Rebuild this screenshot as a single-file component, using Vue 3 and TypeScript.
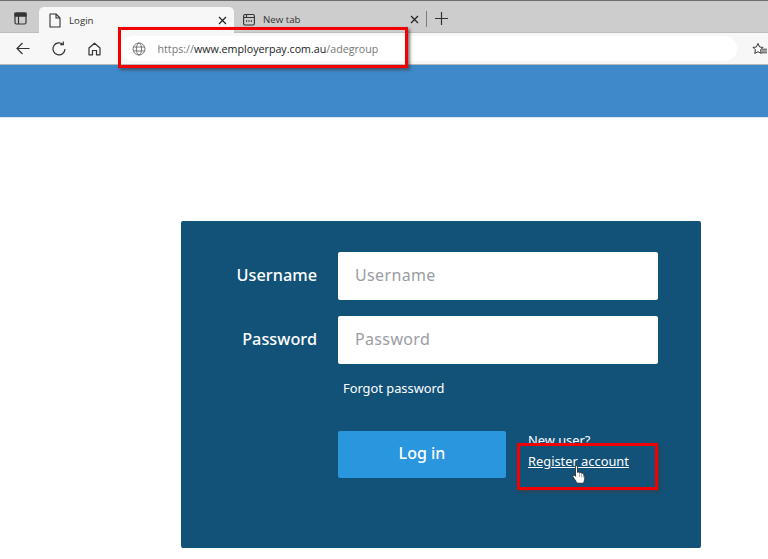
<script setup lang="ts">
const host = "www.employerpay.com.au";
</script>

<template>
  <div class="page">
    <header class="tabstrip">
      <svg class="winicon" width="13" height="13" viewBox="0 0 13 13" fill="none" stroke="#333" stroke-width="1.2"><rect x="1" y="1" width="11" height="11" rx="1.5"/><path d="M1 3.8h11M4.5 3.8V12" /><path d="M1 1h11v2.8H1z" fill="#333"/></svg>
      <div class="tab active">
        <svg width="12" height="15" viewBox="0 0 12 15" fill="none" stroke="#333" stroke-width="1.1"><path d="M1 1h6l4 4v9H1z" stroke-linejoin="round"/><path d="M7 1v4h4"/></svg>
        <span class="tabtitle">Login</span>
        <svg class="close" width="9" height="9" viewBox="0 0 9 9" stroke="#222" stroke-width="1.2"><path d="M1 1l7 7M8 1l-7 7"/></svg>
      </div>
      <div class="tab plain">
        <svg width="12" height="13" viewBox="0 0 12 13" fill="none" stroke="#333" stroke-width="1.1"><rect x=".6" y="1.5" width="10.8" height="10.5" rx="1.5"/><path d="M.6 4.5h10.8M3.5 1.5v3"/><path d="M3 8h1.2M5.4 8h1.2M7.8 8H9" stroke-width="1.3"/></svg>
        <span class="tabtitle">New tab</span>
        <svg class="close" width="9" height="9" viewBox="0 0 9 9" stroke="#222" stroke-width="1.2"><path d="M1 1l7 7M8 1l-7 7"/></svg>
      </div>
      <span class="sep"></span>
      <svg class="plus" width="13" height="13" viewBox="0 0 13 13" stroke="#333" stroke-width="1.2"><path d="M6.5 0v13M0 6.5h13"/></svg>
    </header>

    <div class="toolbar">
      <svg class="navicon back" width="14" height="13" viewBox="0 0 14 13" fill="none" stroke="#333" stroke-width="1.2"><path d="M13.5 6.5H1M6.5 1 1 6.5 6.5 12"/></svg>
      <svg class="navicon reload" width="14" height="15" viewBox="0 0 14 15" fill="none" stroke="#333" stroke-width="1.2"><path d="M13 8a6 6 0 1 1-2-4.6"/><path d="M11.3 .6v3h-3"/></svg>
      <svg class="navicon home" width="13" height="14" viewBox="0 0 13 14" fill="none" stroke="#333" stroke-width="1.2"><path d="M1 6 6.5 1.2 12 6v6.8H8.5V8.5h-4v4.3H1z" stroke-linejoin="round"/></svg>
      <div class="address">
        <svg width="14" height="14" viewBox="0 0 14 14" fill="none" stroke="#777" stroke-width="1"><circle cx="7" cy="7" r="6"/><ellipse cx="7" cy="7" rx="2.6" ry="6"/><path d="M1.3 5h11.4M1.3 9h11.4"/></svg>
        <span class="url"><span class="dim">https://</span><span class="host">{{ host }}</span><span class="dim">/adegroup</span></span>
      </div>
      <svg class="fav" width="15" height="14" viewBox="0 0 15 14" fill="none" stroke="#333" stroke-width="1"><path d="M6 1.5 7.600 5l3.400.4-2.400 2.400.6 3.600L6 9.700l-3.200 1.700.6-3.600L1 5.400 4.400 5z" fill="#fff"/><path d="M9.500 7.200H15M9.500 9H15M9.500 10.800H15" stroke-width=".9"/></svg>
    </div>

    <div class="banner"></div>

    <main class="content">
      <form class="card" @submit.prevent>
        <div class="row">
          <label class="label">Username</label>
          <div class="input">Username</div>
        </div>
        <div class="row">
          <label class="label">Password</label>
          <div class="input">Password</div>
        </div>
        <a class="forgot">Forgot password</a>
        <div class="actions">
          <button class="login" type="button">Log in</button>
          <div class="newuser">
            <div>New user?</div>
            <a class="register">Register account</a>
          </div>
        </div>
      </form>
    </main>

    <div class="mark mark-url"></div>
    <div class="mark mark-reg"></div>
    <svg class="cursor" width="14" height="19" viewBox="0 0 14 19"><path d="M3.500 1.600c0-1.300 2-1.300 2 0V7.500c.7-.6 1.800-.5 2.100.3.700-.5 1.800-.3 2 .5.800-.4 1.800 0 2 .8l1 2.400c.3 1 .2 2 0 3l-.6 2.500c-.2.700-.7 1.200-1.400 1.200H6c-.6 0-1.100-.3-1.400-.8L1 11.800c-.7-1 .5-2.200 1.500-1.400l1 1z" fill="#fff" stroke="#222" stroke-width=".8"/><path d="M7.500 8v4M9.600 8.500v4M11.500 9.500v3" stroke="#777" stroke-width=".6"/></svg>
  </div>
</template>

<style>
html, body { margin: 0; background: #fff; }
</style>

<style scoped>
.page {
  position: relative;
  width: 768px;
  height: 559px;
  overflow: hidden;
  background: #fff;
  font-family: "Noto Sans", sans-serif;
}
.tabstrip {
  height: 33px;
  box-sizing: border-box;
  background: #cdcdcd;
  border-top: 1px solid #6f6f6f;
  border-bottom: 1px solid #bdbdbd;
  display: flex;
  align-items: flex-end;
  padding-left: 14px;
}
.winicon { margin: 0 12px 7px 0; }
.tab {
  display: flex;
  align-items: center;
  box-sizing: border-box;
  height: 25px;
  font-size: 9.7px;
  color: #333;
  font-family: "Open Sans", sans-serif;
}
.tab.active {
  width: 195px;
  background: #f7f7f7;
  border-radius: 5px 5px 0 0;
  padding: 0 0 0 10px;
  margin-bottom: -1px;
  height: 26px;
}
.tab.plain { width: 193px; padding-left: 9px; }
.tabtitle { margin-left: 8px; flex: 1; }
.tab.plain .tabtitle { margin-left: 8px; }
.close { margin-right: 7px; }
.tab.plain .close { margin-right: 8px; }
.sep { width: 1px; height: 16px; background: #7d7d7d; margin: 0 0 5px -1px; }
.plus { margin: 0 0 7px 8px; }
.toolbar {
  height: 32px;
  box-sizing: border-box;
  background: #f7f7f7;
  border-bottom: 1px solid #b8b8b8;
  display: flex;
  align-items: center;
  padding-left: 16px;
}
.navicon.back { margin-right: 22px; }
.navicon.reload { margin-right: 22px; }
.navicon.home { margin-right: 20px; }
.address {
  width: 616px;
  height: 25px;
  box-sizing: border-box;
  background: #fff;
  border-radius: 13px;
  display: flex;
  align-items: center;
  padding-left: 11px;
}
.url {
  margin-left: 11.500px;
  font-size: 10.7px;
  font-family: "Open Sans", sans-serif;
  white-space: nowrap;
}
.dim { color: #777; }
.host { color: #222; }
.fav { margin-left: 15px; flex: none; }
.banner {
  height: 52px;
  background: #3f88c9;
  border-bottom: 1px solid #dce6ef;
}
.content { padding: 103px 0 0 181px; }
.card {
  width: 520px;
  height: 327px;
  box-sizing: border-box;
  background: #125278;
  border-radius: 2px;
  padding: 31px 43px 0 0;
  color: #fff;
}
.row {
  display: flex;
  align-items: center;
  margin-bottom: 16px;
}
.label {
  width: 136px;
  text-align: right;
  font-size: 16.3px;
  font-weight: 500;
  margin-right: 21px;
  padding-bottom: 2px;
}
.input {
  flex: 1;
  height: 48px;
  background: #fff;
  border-radius: 2px;
  box-sizing: border-box;
  padding: 0 0 2px 17px;
  display: flex;
  align-items: center;
  font-size: 16px;
  letter-spacing: .35px;
  color: #9a9da3;
}
.forgot {
  display: block;
  margin: -2px 0 0 162px;
  font-size: 12.85px;
  line-height: 20px;
  color: #fff;
}
.actions {
  display: flex;
  margin: 33px 0 0 157px;
}
.login {
  width: 168px;
  height: 47px;
  border: 0;
  border-radius: 2px;
  background: #2a96dd;
  color: #fff;
  padding: 0 0 3px;
  font: 500 16px "Noto Sans", sans-serif;
}
.newuser {
  margin: -1px 0 0 22px;
  font-size: 12.85px;
  line-height: 21px;
}
.register {
  text-decoration: underline;
  color: #fff;
}
.mark {
  position: absolute;
  border: 3px solid #f00000;
  box-shadow: 2px 2px 3px rgba(60, 60, 60, .7);
  box-sizing: border-box;
}
.mark-url { left: 118px; top: 27px; width: 290px; height: 41px; }
.mark-reg { left: 517px; top: 443px; width: 141px; height: 47px; }
.cursor { position: absolute; left: 572px; top: 465px; }
</style>
